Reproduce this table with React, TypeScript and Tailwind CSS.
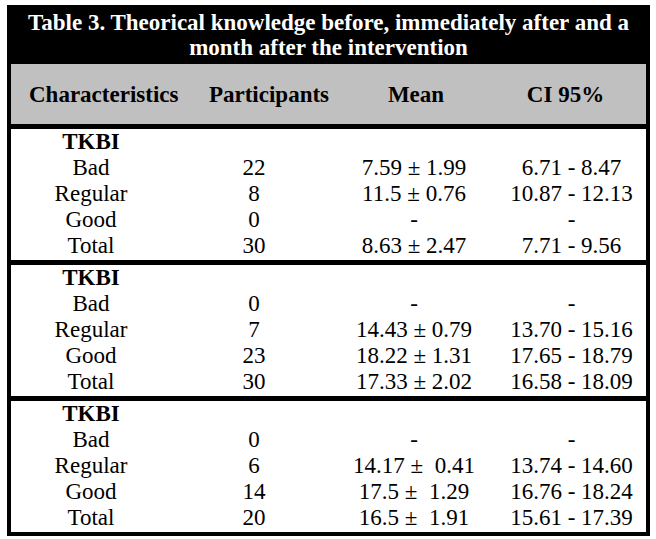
const sections = [
  {
    label: "TKBI",
    rows: [
      ["Bad", "22", "7.59 ± 1.99", "6.71 - 8.47"],
      ["Regular", "8", "11.5 ± 0.76", "10.87 - 12.13"],
      ["Good", "0", "-", "-"],
      ["Total", "30", "8.63 ± 2.47", "7.71 - 9.56"],
    ],
  },
  {
    label: "TKBI",
    rows: [
      ["Bad", "0", "-", "-"],
      ["Regular", "7", "14.43 ± 0.79", "13.70 - 15.16"],
      ["Good", "23", "18.22 ± 1.31", "17.65 - 18.79"],
      ["Total", "30", "17.33 ± 2.02", "16.58 - 18.09"],
    ],
  },
  {
    label: "TKBI",
    rows: [
      ["Bad", "0", "-", "-"],
      ["Regular", "6", "14.17 ±  0.41", "13.74 - 14.60"],
      ["Good", "14", "17.5 ±  1.29", "16.76 - 18.24"],
      ["Total", "20", "16.5 ±  1.91", "15.61 - 17.39"],
    ],
  },
];

const cols = "grid grid-cols-[160px_166px_154px_1fr]";

export default function App() {
  return (
    <div className="min-h-[539px] w-[656px] bg-white pl-[7px] pt-[5px] [font-family:'Liberation_Serif',serif] text-black">
      <div className="w-[643px] border-x-4 border-b-4 border-black">
        {/* Title */}
        <div className="-mx-1 h-[59px] bg-black px-2 pt-[5px] text-center text-[23px] font-bold leading-[25px] text-white">
          Table 3. Theorical knowledge before, immediately after and a month after the intervention
        </div>

        {/* Header */}
        <div className={`${cols} h-[60px] items-center bg-[#c0c0c0] pt-[3px] text-[23px] font-bold`}>
          <div className="pl-[18px] text-center">Characteristics</div>
          <div className="pl-[30px] text-center">Participants</div>
          <div className="pl-[4px] text-center">Mean</div>
          <div className="pr-[6px] text-center">CI 95%</div>
        </div>

        {sections.map((s, i) => (
          <div key={i} className="border-t-[5px] border-black pb-[1px] text-[23px] leading-[26px]">
            <div className={cols}>
              <div className="text-center font-bold">{s.label}</div>
            </div>
            {s.rows.map((r) => (
              <div key={r[0]} className={cols}>
                <div className="text-center">{r[0]}</div>
                <div className="text-center">{r[1]}</div>
                <div className="whitespace-pre text-center">{r[2]}</div>
                <div className="whitespace-pre pl-[6px] text-center">{r[3]}</div>
              </div>
            ))}
          </div>
        ))}
      </div>
    </div>
  );
}
